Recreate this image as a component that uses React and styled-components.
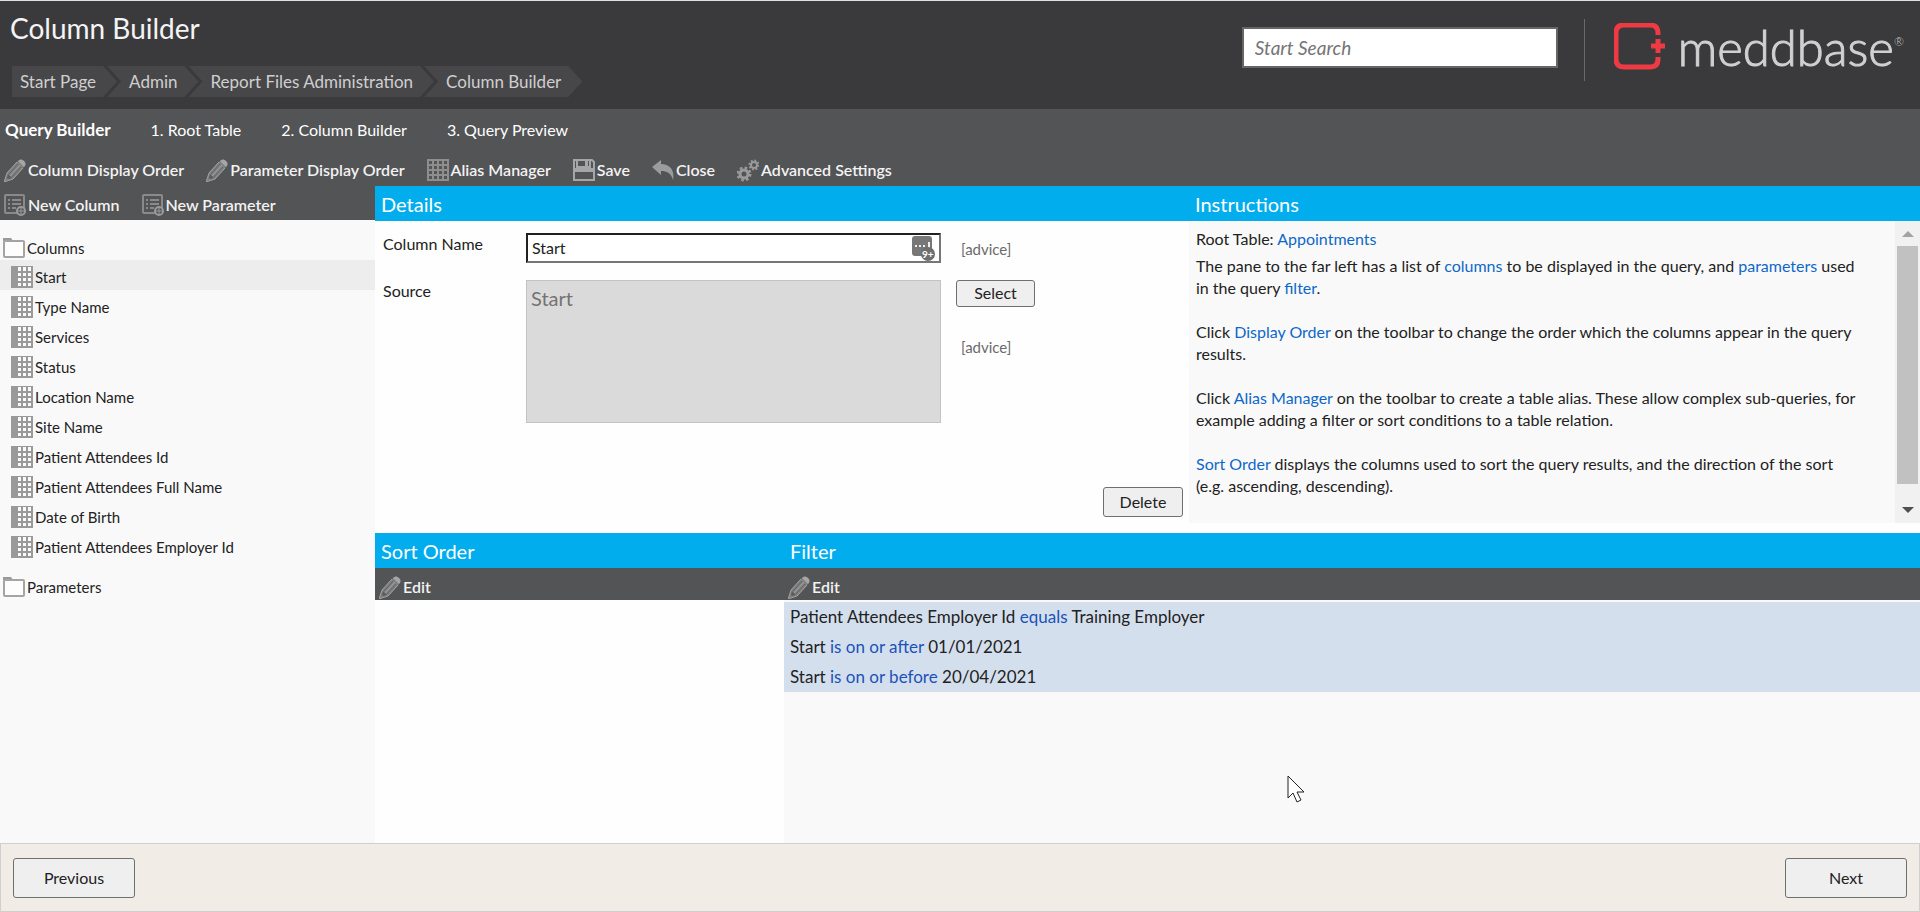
import styled, { createGlobalStyle } from "styled-components";

const columns = [
  "Start",
  "Type Name",
  "Services",
  "Status",
  "Location Name",
  "Site Name",
  "Patient Attendees Id",
  "Patient Attendees Full Name",
  "Date of Birth",
  "Patient Attendees Employer Id",
];

const filters = [
  { field: "Patient Attendees Employer Id", operator: "equals", value: "Training Employer" },
  { field: "Start", operator: "is on or after", value: "01/01/2021" },
  { field: "Start", operator: "is on or before", value: "20/04/2021" },
];

const PencilIcon = () => (
  <svg width="22" height="23" viewBox="0 0 22 23" aria-hidden="true">
    <path d="M0 23 L3 14 L14 2 Q17 -1 20 2 Q23 5 20 8 L9 20 Z" fill="#808080" />
    <path d="M3 14 L13 3 M9 20 L19 9 M6 17 L16 6" fill="none" stroke="#a3a3a3" strokeWidth="1" />
    <path d="M5 15 L14 5 M8 18 L17 8" fill="none" stroke="#646464" strokeWidth="1" />
    <path d="M14 2 Q17 -1 20 2 Q23 5 20 8 Z" fill="#a6a6a6" />
    <path d="M3 19 L4 15 L8 19 L4 20 Z" fill="#5c5c5c" />
    <path d="M0 23 L3 14 M0 23 L9 20" stroke="#9c9c9c" />
  </svg>
);

const GridIcon = () => (
  <svg width="22" height="22" viewBox="0 0 22 22" aria-hidden="true">
    <path
      d="M1 1H21V21H1Z M6 1V21 M11 1V21 M16 1V21 M1 6H21 M1 11H21 M1 16H21"
      fill="none"
      stroke="#8e8e8e"
      strokeWidth="2"
    />
  </svg>
);

const SaveIcon = () => (
  <svg width="22" height="22" viewBox="0 0 22 22" aria-hidden="true">
    <path d="M1 1H19L21 3V21H1Z" fill="none" stroke="#a6a6a6" strokeWidth="2" />
    <path d="M4 1V8H17V1 M1 12H21" fill="none" stroke="#a6a6a6" strokeWidth="2" />
    <path d="M12 2H15V7H12Z" fill="#a6a6a6" />
    <path d="M1 9H21V12H1Z" fill="#a6a6a6" />
  </svg>
);

const CloseIcon = () => (
  <svg width="22" height="20" viewBox="0 0 22 20" aria-hidden="true">
    <path d="M0 7 L9 0 V4 C17 4 23 9 21 20 C19 13 15 11 9 11 V15 Z" fill="#9c9c9c" />
  </svg>
);

const GearsIcon = () => (
  <svg width="22" height="23" viewBox="0 0 22 23" aria-hidden="true">
    <circle cx="7" cy="15" r="4" fill="none" stroke="#9a9a9a" strokeWidth="3" />
    <circle cx="7" cy="15" r="6" fill="none" stroke="#9a9a9a" strokeWidth="3" strokeDasharray="2.4 2.3" />
    <circle cx="17" cy="6" r="3" fill="none" stroke="#9a9a9a" strokeWidth="2" />
    <circle cx="17" cy="6" r="4.5" fill="none" stroke="#9a9a9a" strokeWidth="2" strokeDasharray="1.8 1.7" />
  </svg>
);

const AddListIcon = () => (
  <svg width="22" height="22" viewBox="0 0 22 22" aria-hidden="true">
    <rect x="1" y="1" width="19" height="18" rx="1" fill="none" stroke="#8a8a8a" strokeWidth="2" />
    <path d="M4 6H6 M8 6H17 M4 10H6 M8 10H17 M4 14H6 M8 14H12" stroke="#8a8a8a" strokeWidth="2" />
    <circle cx="17" cy="17" r="4" fill="#535456" stroke="#9a9a9a" strokeWidth="2" />
    <path d="M17 14V20 M14 17H20" stroke="#9a9a9a" strokeWidth="1" />
  </svg>
);

const FolderIcon = () => (
  <svg width="22" height="20" viewBox="0 0 22 20" aria-hidden="true">
    <path d="M0 0H8L10 3H0Z" fill="#9a9a9a" />
    <rect x="1" y="3" width="20" height="16" rx="1" fill="#fdfdfd" stroke="#a4a4a4" strokeWidth="2" />
  </svg>
);

const ColumnIcon = () => (
  <svg width="22" height="22" viewBox="0 0 22 22" aria-hidden="true">
    <rect width="22" height="22" fill="#999" />
    <path
      d="M7 1h3v4h-3z M12 1h3v4h-3z M17 1h3v4h-3z M7 7h3v3h-3z M12 7h3v3h-3z M17 7h3v3h-3z M7 12h3v3h-3z M12 12h3v3h-3z M17 12h3v3h-3z M7 17h3v3h-3z M12 17h3v3h-3z M17 17h3v3h-3z"
      fill="#fafafa"
    />
  </svg>
);

const PasswordIcon = () => (
  <svg width="24" height="26" viewBox="0 0 24 26" aria-hidden="true">
    <rect x="0" y="0" width="20" height="20" rx="3" fill="#777" />
    <path d="M3 10h2 M7 10h2 M11 10h2 M17 6v6" stroke="#eee" strokeWidth="2" />
    <circle cx="16" cy="18" r="7" fill="#6e6e6e" />
    <text x="10" y="22" fill="#fff" fontFamily="Lato, sans-serif" fontSize="10" fontWeight="700">
      9+
    </text>
  </svg>
);

const LogoMark = () => (
  <svg width="52" height="48" viewBox="0 0 52 48" aria-hidden="true">
    <path
      d="M44 12 V10 Q44 2 36 2 H10 Q2 2 2 10 V36 Q2 44 10 44 H36 Q44 44 44 36 V34"
      fill="none"
      stroke="#ee3a43"
      strokeWidth="5"
    />
    <path d="M44 16V30 M37 23H51" stroke="#ee3a43" strokeWidth="5" />
  </svg>
);

const PointerIcon = () => (
  <svg width="20" height="29" viewBox="0 0 20 29" aria-hidden="true">
    <path d="M1 1V23L6 18L10 27L14 25L10 17H17Z" fill="#fff" stroke="#222" />
  </svg>
);

const App = () => {
  return (
    <Page>
      <GlobalStyle />
      <Header>
        <div>
          <Title>Column Builder</Title>
          <Breadcrumbs aria-label="Breadcrumb">
            <Crumb href="#start" $first>Start Page</Crumb>
            <Crumb href="#admin">Admin</Crumb>
            <Crumb href="#files">Report Files Administration</Crumb>
            <Crumb href="#builder">Column Builder</Crumb>
          </Breadcrumbs>
        </div>
        <Brand>
          <Search type="search" placeholder="Start Search" aria-label="Start Search" />
          <Divider />
          <Logo>
            <LogoMark />
            <Wordmark>
              meddbase<sup>®</sup>
            </Wordmark>
          </Logo>
        </Brand>
      </Header>
      <Steps>
        <strong>Query Builder</strong>
        <a href="#root">1. Root Table</a>
        <a href="#builder">2. Column Builder</a>
        <a href="#preview">3. Query Preview</a>
      </Steps>
      <Toolbar>
        <Tool><PencilIcon />Column Display Order</Tool>
        <Tool><PencilIcon />Parameter Display Order</Tool>
        <Tool><GridIcon />Alias Manager</Tool>
        <Tool><SaveIcon />Save</Tool>
        <Tool><CloseIcon />Close</Tool>
        <Tool><GearsIcon />Advanced Settings</Tool>
      </Toolbar>
      <Main>
        <Sidebar>
          <SideTools>
            <Tool><AddListIcon />New Column</Tool>
            <Tool><AddListIcon />New Parameter</Tool>
          </SideTools>
          <Tree>
            <Folder><FolderIcon />Columns</Folder>
            {columns.map((name, i) => (
              <TreeItem key={name} $active={i === 0}>
                <ColumnIcon />
                {name}
              </TreeItem>
            ))}
            <Folder $last><FolderIcon />Parameters</Folder>
          </Tree>
        </Sidebar>
        <Content>
          <TopRow>
            <Details>
              <PanelTitle>Details</PanelTitle>
              <Form>
                <label htmlFor="column-name">Column Name</label>
                <NameField>
                  <NameInput id="column-name" defaultValue="Start" />
                  <FieldBadge><PasswordIcon /></FieldBadge>
                </NameField>
                <FieldSide>
                  <Advice>[advice]</Advice>
                </FieldSide>
                <label htmlFor="source">Source</label>
                <Source id="source" defaultValue="Start" disabled />
                <FieldSide>
                  <Button $size="small">Select</Button>
                  <Advice>[advice]</Advice>
                </FieldSide>
              </Form>
              <DetailsActions>
                <Button $size="medium">Delete</Button>
              </DetailsActions>
            </Details>
            <Instructions>
              <PanelTitle>Instructions</PanelTitle>
              <Scroller>
                <Help>
                  <RootTable>
                    Root Table: <a href="#appointments">Appointments</a>
                  </RootTable>
                  <p>
                    The pane to the far left has a list of <a href="#columns">columns</a> to be displayed in
                    the query, and <a href="#parameters">parameters</a> used in the query{" "}
                    <a href="#filter">filter</a>.
                  </p>
                  <p>
                    Click <a href="#order">Display Order</a> on the toolbar to change the order which the
                    columns appear in the query results.
                  </p>
                  <p>
                    Click <a href="#alias">Alias Manager</a> on the toolbar to create a table alias. These
                    allow complex sub-queries, for example adding a filter or sort conditions to a table
                    relation.
                  </p>
                  <p>
                    <a href="#sort">Sort Order</a> displays the columns used to sort the query results, and
                    the direction of the sort (e.g. ascending, descending).
                  </p>
                </Help>
                <ScrollTrack aria-hidden="true">
                  <Arrow $dir="up" />
                  <Thumb />
                  <Arrow $dir="down" />
                </ScrollTrack>
              </Scroller>
            </Instructions>
          </TopRow>
          <BottomRow>
            <SortOrder>
              <PanelTitle>Sort Order</PanelTitle>
              <EditBar>
                <Tool><PencilIcon />Edit</Tool>
              </EditBar>
            </SortOrder>
            <Filter>
              <PanelTitle>Filter</PanelTitle>
              <EditBar>
                <Tool><PencilIcon />Edit</Tool>
              </EditBar>
              <FilterList>
                {filters.map((f) => (
                  <li key={f.operator}>
                    {f.field} <span>{f.operator}</span> {f.value}
                  </li>
                ))}
              </FilterList>
              <Pointer><PointerIcon /></Pointer>
            </Filter>
          </BottomRow>
        </Content>
      </Main>
      <Footer>
        <Button $size="large">Previous</Button>
        <Button $size="large">Next</Button>
      </Footer>
    </Page>
  );
};

const GlobalStyle = createGlobalStyle`
  * {
    box-sizing: border-box;
  }
  body {
    margin: 0;
    font-family: Lato, "Open Sans", sans-serif;
    font-size: 16px;
    line-height: 22px;
    color: #222;
    background: #fefefe;
  }
  a {
    color: inherit;
    text-decoration: none;
  }
  button, input, textarea {
    font-family: inherit;
  }
  p, h1, h2, ul {
    margin: 0;
    padding: 0;
  }
  svg {
    flex: none;
  }
`;
const Page = styled.div`
  display: flex;
  flex-direction: column;
  min-height: 100vh;
`;
const Header = styled.header`
  display: flex;
  justify-content: space-between;
  height: 109px;
  padding: 0 16px 0 10px;
  border-top: 1px solid #dde3de;
  background: #3a3a3c;
`;
const Title = styled.h1`
  padding-top: 11px;
  font-size: 28px;
  font-weight: 400;
  line-height: 32px;
  color: #f4f4f4;
`;
const Breadcrumbs = styled.nav`
  display: flex;
  gap: 4px;
  padding: 22px 0 0 2px;
`;
const Crumb = styled.a`
  height: 31px;
  padding: 0 21px 0 ${(p) => (p.$first ? 8 : 22)}px;
  margin-right: -14px;
  font-size: 17px;
  line-height: 31px;
  color: #cfcfcf;
  background: #474749;
  clip-path: ${(p) =>
    p.$first
      ? "polygon(0 0, calc(100% - 14px) 0, 100% 50%, calc(100% - 14px) 100%, 0 100%)"
      : "polygon(0 0, calc(100% - 14px) 0, 100% 50%, calc(100% - 14px) 100%, 0 100%, 14px 50%)"};
`;
const Brand = styled.div`
  display: flex;
  align-items: flex-start;
  padding-top: 18px;
`;
const Search = styled.input`
  width: 316px;
  height: 41px;
  margin: 8px 26px 0 0;
  padding: 0 11px;
  border: 2px solid #666;
  background: #fff;
  font-size: 19px;
  font-style: italic;
  &::placeholder {
    color: #757575;
  }
`;
const Divider = styled.div`
  width: 1px;
  height: 62px;
  margin-right: 29px;
  background: #69696b;
`;
const Logo = styled.div`
  display: flex;
  gap: 12px;
  align-items: center;
  padding-top: 4px;
`;
const Wordmark = styled.div`
  display: flex;
  font-size: 49px;
  font-weight: 300;
  line-height: 46px;
  color: #d0d0d0;
  -webkit-text-stroke: 1px #d0d0d0;
  sup {
    font-size: 12px;
    line-height: 36px;
    -webkit-text-stroke: 0;
  }
`;
const Steps = styled.nav`
  display: flex;
  align-items: center;
  gap: 40px;
  height: 43px;
  padding: 0 5px 2px;
  color: #fff;
  background: #535456;
  strong {
    font-size: 17px;
  }
`;
const Toolbar = styled.div`
  display: flex;
  align-items: center;
  gap: 22px;
  height: 34px;
  padding: 2px 4px 0;
  background: #535456;
`;
const Tool = styled.button`
  display: flex;
  align-items: center;
  gap: 2px;
  padding: 0;
  border: 0;
  background: none;
  color: #f2f2f2;
  font-size: 16px;
  font-weight: 600;
  line-height: 22px;
`;
const Main = styled.main`
  display: flex;
  flex: 1;
`;
const Sidebar = styled.aside`
  flex: none;
  width: 375px;
  background: #f9f9f9;
`;
const SideTools = styled(Toolbar)`
  padding-top: 4px;
`;
const Tree = styled.ul`
  padding-top: 15px;
  font-size: 15px;
  list-style: none;
`;
const Folder = styled.li`
  display: flex;
  align-items: center;
  gap: 2px;
  height: 25px;
  padding-left: 3px;
  margin-top: ${(p) => (p.$last ? 14 : 0)}px;
`;
const TreeItem = styled.li`
  display: flex;
  align-items: center;
  gap: 2px;
  height: 30px;
  padding: 4px 0 0 11px;
  background: ${(p) => (p.$active ? "#ededed" : "none")};
`;
const Content = styled.div`
  display: flex;
  flex: 1;
  flex-direction: column;
`;
const TopRow = styled.div`
  display: flex;
  height: 347px;
`;
const PanelTitle = styled.h2`
  height: 35px;
  padding: 0 6px;
  color: #fff;
  background: #02adee;
  font-size: 20px;
  font-weight: 400;
  line-height: 36px;
`;
const Details = styled.section`
  display: flex;
  flex: 814;
  flex-direction: column;
`;
const Form = styled.div`
  display: grid;
  grid-template-columns: 134px 415px 1fr;
  column-gap: 9px;
  row-gap: 17px;
  padding: 12px 8px 0;
`;
const NameField = styled.div`
  position: relative;
`;
const NameInput = styled.input`
  display: block;
  width: 100%;
  height: 30px;
  padding: 0 4px 2px;
  border: 2px inset #767676;
  background: #fff;
  color: #222;
  font-size: 16px;
`;
const FieldBadge = styled.span`
  position: absolute;
  top: 3px;
  right: 5px;
`;
const Advice = styled.span`
  padding: 5px 0 0 5px;
  color: #6b6b6b;
  font-size: 15px;
`;
const Source = styled.textarea`
  width: 100%;
  height: 143px;
  padding: 5px 4px;
  border: 1px solid #c3c3c3;
  background: #dadada;
  color: #747474;
  font-size: 20px;
  resize: none;
`;
const FieldSide = styled.div`
  display: flex;
  flex-direction: column;
  gap: 24px;
  align-items: flex-start;
  padding-left: 6px;
`;
const buttonSizes = {
  small: "width: 79px; height: 27px;",
  medium: "width: 80px; height: 30px;",
  large: "width: 122px; height: 40px;",
};
const Button = styled.button`
  ${(p) => buttonSizes[p.$size]}
  padding: 0 0 2px;
  border: 1px solid #6f6f6f;
  border-radius: 3px;
  background: #efefef;
  color: #222;
  font-size: 16px;
`;
const DetailsActions = styled.div`
  display: flex;
  justify-content: flex-end;
  margin-top: auto;
  padding: 0 6px 16px 0;
`;
const Instructions = styled.section`
  display: flex;
  flex: 731;
  flex-direction: column;
`;
const Scroller = styled.div`
  display: flex;
  flex: 1;
  margin-bottom: 10px;
  background: #f9f9f9;
`;
const Help = styled.div`
  flex: 1;
  padding: 7px 32px 0 7px;
  a {
    color: #0d68c9;
  }
  p + p {
    margin-top: 22px;
  }
`;
const RootTable = styled.div`
  margin-bottom: 5px;
`;
const ScrollTrack = styled.div`
  display: flex;
  flex-direction: column;
  justify-content: space-between;
  align-items: center;
  width: 25px;
  padding: 10px 0;
  background: #f1f1f1;
`;
const Arrow = styled.span`
  border: 6px solid transparent;
  border-top-width: ${(p) => (p.$dir === "up" ? 0 : 6)}px;
  border-bottom-width: ${(p) => (p.$dir === "up" ? 6 : 0)}px;
  border-top-color: #505050;
  border-bottom-color: #a3a3a3;
`;
const Thumb = styled.span`
  width: 21px;
  height: 238px;
  margin-bottom: 14px;
  background: #c1c1c1;
`;
const BottomRow = styled.div`
  display: flex;
  flex: 1;
`;
const SortOrder = styled.section`
  flex: 409;
`;
const Filter = styled.section`
  position: relative;
  flex: 1136;
  background: #f9f9f9;
`;
const EditBar = styled.div`
  display: flex;
  align-items: center;
  height: 32px;
  padding: 6px 4px 0;
  background: #535456;
`;
const FilterList = styled.ul`
  margin-top: 2px;
  padding: 0 6px;
  background: #d4dfed;
  font-size: 17px;
  line-height: 30px;
  list-style: none;
  span {
    color: #1b52b8;
  }
`;
const Pointer = styled.span`
  position: absolute;
  top: 242px;
  left: 503px;
`;
const Footer = styled.footer`
  display: flex;
  justify-content: space-between;
  height: 69px;
  padding: 14px 12px;
  border: 1px solid #cfcfcf;
  background: #f1ede6;
`;
export default App;
